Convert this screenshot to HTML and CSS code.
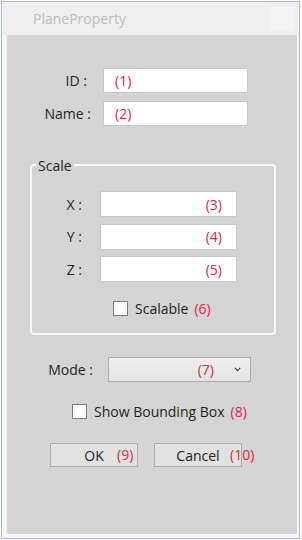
FILE: index.html
```html
<!DOCTYPE html>
<html>
<head>
<meta charset="utf-8">
<link rel="stylesheet" href="styles.css">
</head>
<body>
<div class="frame">
  <div class="titlebar">
    <span class="title">PlaneProperty</span>
    <span class="closebox"></span>
  </div>
  <div class="panel">
    <div class="row row-id">
      <label class="lbl lbl-id">ID :</label>
      <div class="field field-wide"><span class="ann">(1)</span></div>
    </div>
    <div class="row row-name">
      <label class="lbl lbl-name">Name :</label>
      <div class="field field-wide"><span class="ann">(2)</span></div>
    </div>

    <div class="group">
      <span class="legend">Scale</span>
      <div class="grow">
        <label class="glbl">X :</label>
        <div class="field field-num"><span class="ann">(3)</span></div>
      </div>
      <div class="grow">
        <label class="glbl">Y :</label>
        <div class="field field-num"><span class="ann">(4)</span></div>
      </div>
      <div class="grow">
        <label class="glbl">Z :</label>
        <div class="field field-num"><span class="ann">(5)</span></div>
      </div>
      <div class="check check-scal">
        <span class="box"></span>
        <span class="ctext">Scalable</span>
        <span class="ann">(6)</span>
      </div>
    </div>

    <div class="row row-mode">
      <label class="lbl lbl-mode">Mode :</label>
      <div class="combo">
        <span class="ann">(7)</span>
        <svg class="chev" width="7" height="5" viewBox="0 0 7 5"><path d="M0.8 0.8 L3.5 3.6 L6.2 0.8" fill="none" stroke="#444" stroke-width="1.2"/></svg>
      </div>
    </div>

    <div class="check check-bb">
      <span class="box"></span>
      <span class="ctext">Show Bounding Box</span>
      <span class="ann">(8)</span>
    </div>

    <div class="buttons">
      <div class="btn btn-ok">OK<span class="ann btn-ann ann-ok">(9)</span></div>
      <div class="btn btn-cancel">Cancel<span class="ann btn-ann ann-cancel">(10)</span></div>
    </div>
  </div>
</div>
</body>
</html>
```

FILE: styles.css
```css
html, body {
  margin: 0;
  padding: 0;
  background: #ffffff;
}
body {
  font-family: "Open Sans", "Noto Sans", sans-serif;
  font-size: 14px;
  color: #1e1e1e;
}
.frame {
  margin: 1px 0 0 1px;
  width: 299px;
  height: 538px;
  box-sizing: border-box;
  border: 1px solid #a8b6e2;
  background: #f7f7f7;
  display: flex;
  flex-direction: column;
}
.titlebar {
  height: 33px;
  background: #efefef;
  display: flex;
  align-items: center;
  padding-left: 31px;
  flex-shrink: 0;
}
.title {
  color: #bcbcbc;
  font-size: 14px;
  line-height: 18px;
}
.closebox {
  margin-left: auto;
  margin-right: 5px;
  width: 23px;
  height: 24px;
  background: #f4f4f4;
}
.panel {
  margin: 0 2px 4px 5px;
  flex: 1;
  background: #d4d4d4;
  padding-top: 33px;
  box-sizing: border-box;
}
.row {
  display: flex;
  align-items: center;
  height: 25px;
}
.row-name { margin-top: 8px; }
.lbl {
  text-align: right;
  flex-shrink: 0;
}
.lbl-id { width: 80px; margin-right: 16px; }
.lbl-name { width: 84px; margin-right: 12px; }
.lbl-mode { width: 86px; margin-right: 15px; }
.field {
  height: 100%;
  box-sizing: border-box;
  background: #ffffff;
  border: 1px solid #c9c9c9;
  display: flex;
  align-items: center;
}
.field-wide {
  width: 145px;
  padding-left: 11px;
}
.ann {
  color: #dc2840;
}
.group {
  position: relative;
  margin: 38px 0 0 23px;
  width: 246px;
  height: 171px;
  box-sizing: border-box;
  border: 2px solid #f6f6f6;
  border-radius: 4px;
  padding-top: 25px;
}
.legend {
  position: absolute;
  top: -9px;
  left: 4px;
  padding: 0 2px;
  line-height: 18px;
  background: #d4d4d4;
}
.grow {
  display: flex;
  align-items: center;
  height: 26px;
  margin-bottom: 6.5px;
}
.glbl {
  width: 50px;
  text-align: right;
  margin-right: 18px;
  flex-shrink: 0;
}
.field-num {
  width: 137px;
  justify-content: flex-end;
  padding-right: 14px;
}
.check {
  display: flex;
  align-items: center;
  height: 20px;
}
.box {
  width: 15px;
  height: 15px;
  box-sizing: border-box;
  border: 1px solid #7a7a7a;
  background: #ffffff;
  margin-right: 7px;
  flex-shrink: 0;
}
.ctext { margin-right: 6px; }
.check-scal {
  margin-top: 16px;
  padding-left: 81px;
}
.row-mode { margin-top: 22px; }
.combo {
  width: 143px;
  height: 100%;
  box-sizing: border-box;
  border: 1px solid #adadad;
  background: linear-gradient(#efefef, #e3e3e3);
  display: flex;
  align-items: center;
  justify-content: flex-end;
  padding-right: 9px;
}
.chev { margin-left: 20px; }
.check-bb {
  margin-top: 19px;
  padding-left: 65px;
}
.buttons {
  display: flex;
  margin-top: 22px;
  padding-left: 43px;
  gap: 16px;
}
.btn {
  position: relative;
  width: 88px;
  height: 24px;
  box-sizing: border-box;
  border: 1px solid #adadad;
  background: #e1e1e1;
  display: flex;
  align-items: center;
  justify-content: center;
}
.btn-ann {
  position: absolute;
  top: 50%;
  transform: translateY(-50%);
  line-height: 18px;
}
.ann-ok { left: 66px; }
.ann-cancel { left: 75px; }
```
